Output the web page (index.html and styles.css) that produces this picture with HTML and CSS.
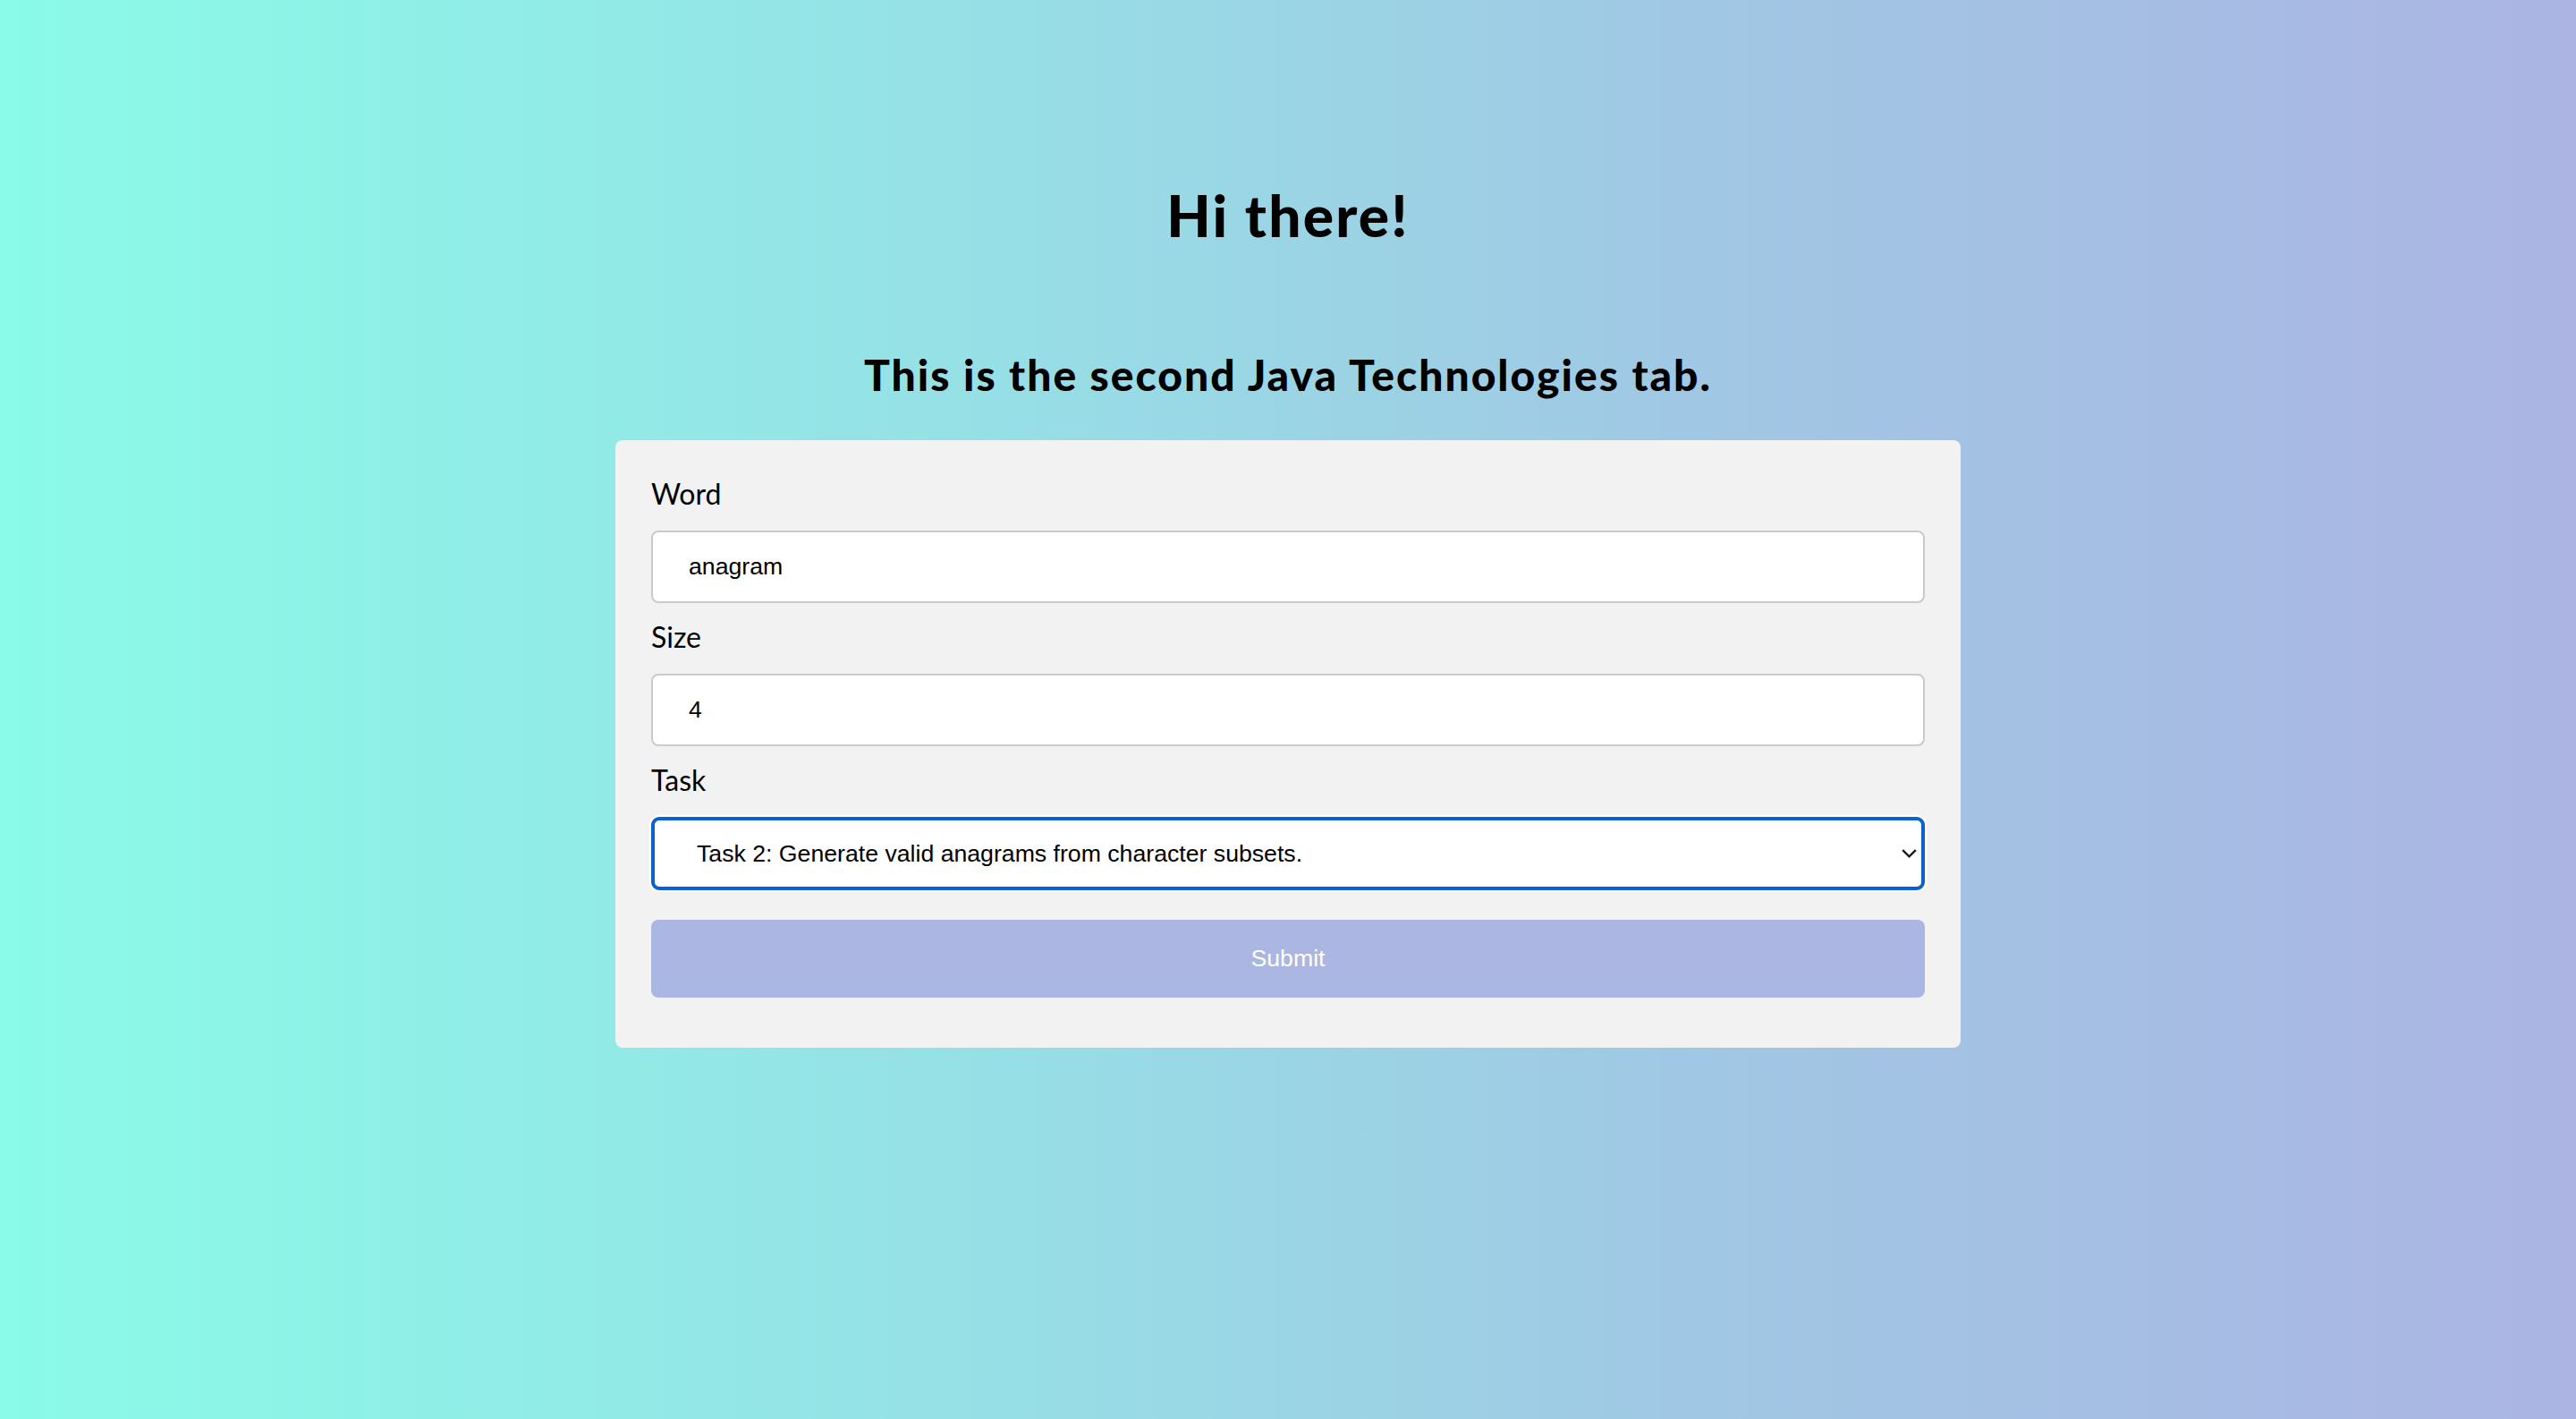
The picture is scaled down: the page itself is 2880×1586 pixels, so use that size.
FILE: index.html
```html
<!DOCTYPE html>
<html lang="en">
<head>
<meta charset="utf-8">
<title>Java Technologies</title>
<link rel="stylesheet" href="styles.css">
</head>
<body>
<main class="page">
  <h1 class="title">Hi there!</h1>
  <h2 class="subtitle">This is the second Java Technologies tab.</h2>
  <form class="card">
    <label class="label" for="word">Word</label>
    <input class="field" id="word" type="text" value="anagram">
    <label class="label" for="size">Size</label>
    <input class="field" id="size" type="text" value="4">
    <label class="label" for="task">Task</label>
    <div class="select-wrap">
      <select class="select" id="task">
        <option>Task 2: Generate valid anagrams from character subsets.</option>
      </select>
      <svg class="chevron" width="17" height="10" viewBox="0 0 17 10" aria-hidden="true">
        <path d="M1.2 1.2 L8.5 8.3 L15.8 1.2" fill="none" stroke="#1a1a1a" stroke-width="2.4"/>
      </svg>
    </div>
    <button class="submit" type="button">Submit</button>
  </form>
</main>
</body>
</html>
```

FILE: styles.css
```css
html, body {
  margin: 0;
  padding: 0;
}

body {
  min-height: 1586px;
  background: linear-gradient(90deg, #8afbe8 0%, #95e2e6 35%, #a0c8e4 65%, #abb4e3 100%);
  font-family: Lato, "Noto Sans", sans-serif;
  color: #000;
}

.page {
  display: flex;
  flex-direction: column;
  align-items: center;
  padding-top: 203px;
}

.title {
  margin: 0;
  font-size: 64px;
  line-height: 76.8px;
  font-weight: 900;
  letter-spacing: 2.2px;
}

.subtitle {
  margin: 110px 0 45px;
  font-size: 48px;
  line-height: 57.6px;
  font-weight: 900;
  letter-spacing: 2px;
}

.card {
  width: 1504px;
  box-sizing: border-box;
  padding: 40px 40px 56px;
  background: #f2f2f2;
  border-radius: 8px;
  display: flex;
  flex-direction: column;
}

.label {
  font-size: 32px;
  line-height: 40px;
  font-weight: 400;
  margin: 0 0 21px;
}

.field {
  height: 81px;
  box-sizing: border-box;
  border: 2px solid #cbcbcb;
  border-radius: 8px;
  background: #fff;
  padding: 0 40px;
  font-family: "Liberation Sans", Arial, sans-serif;
  font-size: 26.67px;
  color: #000;
  margin: 0 0 18px;
  outline: none;
}

.select-wrap {
  position: relative;
  margin: 0 0 33px;
}

.select {
  display: block;
  width: 100%;
  height: 82px;
  box-sizing: border-box;
  appearance: none;
  -webkit-appearance: none;
  border: 4px solid #0a62cf;
  border-radius: 9px;
  box-shadow: 0 0 0 2px #fff;
  background: #fff;
  padding: 0 0 0 47px;
  font-family: "Liberation Sans", Arial, sans-serif;
  font-size: 26.67px;
  color: #000;
  outline: none;
}

.chevron {
  position: absolute;
  right: 9px;
  top: 36px;
}

.submit {
  height: 87px;
  border: none;
  border-radius: 8px;
  background: #abb6e2;
  color: #fff;
  font-family: "Liberation Sans", Arial, sans-serif;
  font-size: 26.67px;
  cursor: pointer;
}
```
